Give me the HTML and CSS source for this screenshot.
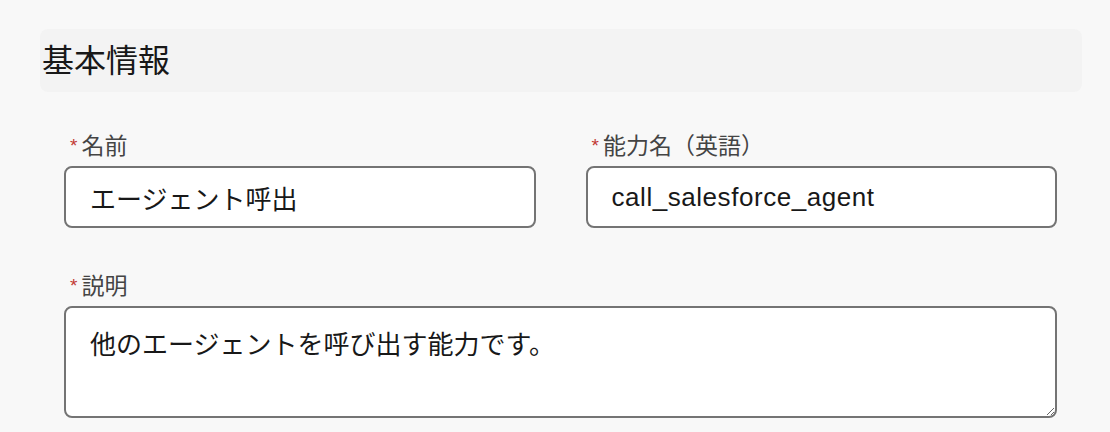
FILE: index.html
```html
<!DOCTYPE html>
<html lang="ja">
<head>
<meta charset="utf-8">
<title>基本情報</title>
<link rel="stylesheet" href="styles.css">
</head>
<body>
<div class="page">
  <div class="section-header"><h2 class="section-title">基本情報</h2></div>
  <div class="fields">
    <div class="field">
      <label class="field-label" for="name"><abbr class="req" title="必須">*</abbr>名前</label>
      <input class="text-input" id="name" type="text" value="エージェント呼出">
    </div>
    <div class="field">
      <label class="field-label" for="apiname"><abbr class="req" title="必須">*</abbr>能力名（英語）</label>
      <input class="text-input text-input-latin" id="apiname" type="text" value="call_salesforce_agent">
    </div>
    <div class="field field-wide">
      <label class="field-label" for="desc"><abbr class="req" title="必須">*</abbr>説明</label>
      <textarea class="text-area" id="desc">他のエージェントを呼び出す能力です。</textarea>
    </div>
  </div>
</div>
</body>
</html>
```

FILE: styles.css
```css
html, body {
  margin: 0;
  background: #f8f8f8;
}
body {
  font-family: "Liberation Sans", "Noto Sans CJK JP", sans-serif;
  color: #181818;
}
.page {
  padding: 29px 28px 0 40px;
}
.section-header {
  height: 63px;
  background: #f3f3f3;
  border-radius: 8px;
  display: flex;
  align-items: center;
  padding-left: 2px;
}
.section-title {
  margin: 0;
  font-size: 32px;
  font-weight: 400;
  line-height: 1;
  color: #181818;
}
.fields {
  padding: 38px 25px 0 24px;
  display: grid;
  grid-template-columns: 1fr 1fr;
  column-gap: 50px;
  row-gap: 42px;
}
.field-wide {
  grid-column: 1 / -1;
}
.field-label {
  display: block;
  height: 32px;
  font-size: 23px;
  line-height: 32px;
  color: #444444;
  padding-left: 6px;
  margin-bottom: 4px;
}
.req {
  color: #c23934;
  font-size: 19px;
  line-height: 0;
  text-decoration: none;
  vertical-align: 2px;
  margin-right: 4px;
  border: 0;
}
.text-input,
.text-area {
  box-sizing: border-box;
  display: block;
  width: 100%;
  border: 2px solid #747474;
  border-radius: 8px;
  background: #ffffff;
  color: #181818;
  font-family: "Liberation Sans", "Noto Sans CJK JP", sans-serif;
  font-size: 26px;
  margin: 0;
  outline: none;
}
.text-input {
  height: 62px;
  padding: 0 24px;
}
.text-input-latin {
  letter-spacing: 0.55px;
}
.text-area {
  height: 112px;
  padding: 18px 24px 16px;
  line-height: 1.5;
  resize: vertical;
}
```
